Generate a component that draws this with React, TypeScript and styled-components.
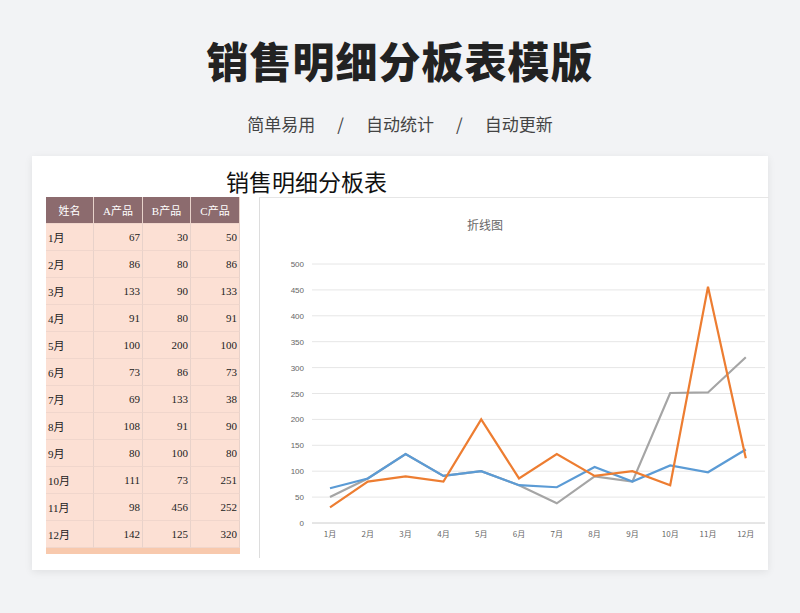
import React from "react";
import styled, { createGlobalStyle } from "styled-components";

const G = createGlobalStyle`
  body { margin:0; background:#f2f3f5; font-family:"Noto Sans CJK SC","Noto Sans",sans-serif; }
`;
const Page = styled.div`width:800px;height:613px;display:flex;flex-direction:column;align-items:center;`;
const Title = styled.h1`margin:30px 0 0;font-size:42px;font-weight:900;color:#222;letter-spacing:1px;line-height:60px;`;
const Sub = styled.div`margin-top:22px;font-size:17px;color:#444;display:flex;gap:22px;line-height:24px;`;
const Card = styled.div`margin-top:20px;width:736px;height:414px;background:#fff;box-shadow:0 2px 8px rgba(0,0,0,0.08);display:flex;flex-direction:column;padding:0 0 0 14px;box-sizing:border-box;`;
const CardTitle = styled.div`font-family:"Noto Sans CJK SC",serif;font-size:23px;color:#111;height:41px;line-height:50px;padding-left:180px;`;
const Body = styled.div`display:flex;gap:19px;`;
const Table = styled.div`width:194px;font-family:"Liberation Serif","Noto Sans CJK SC",serif;font-size:11px;`;
const Row = styled.div<{h?:boolean}>`display:grid;grid-template-columns:48px 49px 48px 49px;height:27px;background:${p=>p.h?"#8c6b6e":"#fce0d4"};color:${p=>p.h?"#fff":"#222"};`;
const Cell = styled.div<{r?:boolean;c?:boolean}>`display:flex;align-items:center;justify-content:${p=>p.c?"center":p.r?"flex-end":"flex-start"};padding:0 2px;border-right:1px solid #e8d2ca;border-bottom:1px solid #f0d6cc;`;
const Foot = styled.div`height:6px;background:#f8c9ad;`;
const ChartBox = styled.div`width:509px;height:360px;border-left:1px solid #ddd;border-top:1px solid #e6e6e6;`;

const A=[67,86,133,91,100,73,69,108,80,111,98,142];
const B=[30,80,90,80,200,86,133,91,100,73,456,125];
const C=[50,86,133,91,100,73,38,90,80,251,252,320];
const rows=A.map((a,i)=>[`${i+1}月`,a,B[i],C[i]]);

function Chart(){
  const x0=70,dx=37.8,yb=325,sc=259/500;
  const X=(i:number)=>x0+i*dx, Y=(v:number)=>yb-v*sc;
  const pts=(d:number[])=>d.map((v,i)=>`${X(i)},${Y(v)}`).join(" ");
  return <svg width="509" height="360" style={{display:"block"}}>
    <text x="225" y="32" fontSize="12" fill="#666" textAnchor="middle" fontFamily="Noto Sans CJK SC">折线图</text>
    {[0,50,100,150,200,250,300,350,400,450,500].map(v=><g key={v}>
      <line x1="52" x2="505" y1={Y(v)} y2={Y(v)} stroke={v?"#e6e6e6":"#ccc"}/>
      <text x="44" y={Y(v)+3} fontSize="8" fill="#666" textAnchor="end" fontFamily="Liberation Sans">{v}</text></g>)}
    {A.map((_,i)=><text key={i} x={X(i)} y={yb+14} fontSize="8" fill="#666" textAnchor="middle" fontFamily="Noto Sans CJK SC">{i+1}月</text>)}
    <polyline points={pts(C)} fill="none" stroke="#a5a5a5" strokeWidth="2.2"/>
    <polyline points={pts(A)} fill="none" stroke="#5b9bd5" strokeWidth="2.2"/>
    <polyline points={pts(B)} fill="none" stroke="#ed7d31" strokeWidth="2.2"/>
  </svg>;
}

export default function App(){
  return <Page><G/>
    <Title>销售明细分板表模版</Title>
    <Sub><span>简单易用</span><span>/</span><span>自动统计</span><span>/</span><span>自动更新</span></Sub>
    <Card>
      <CardTitle>销售明细分板表</CardTitle>
      <Body>
        <Table>
          <Row h><Cell c>姓名</Cell><Cell c>A产品</Cell><Cell c>B产品</Cell><Cell c>C产品</Cell></Row>
          {rows.map(r=><Row key={r[0]}><Cell>{r[0]}</Cell><Cell r>{r[1]}</Cell><Cell r>{r[2]}</Cell><Cell r>{r[3]}</Cell></Row>)}
          <Foot/>
        </Table>
        <ChartBox><Chart/></ChartBox>
      </Body>
    </Card>
  </Page>;
}
